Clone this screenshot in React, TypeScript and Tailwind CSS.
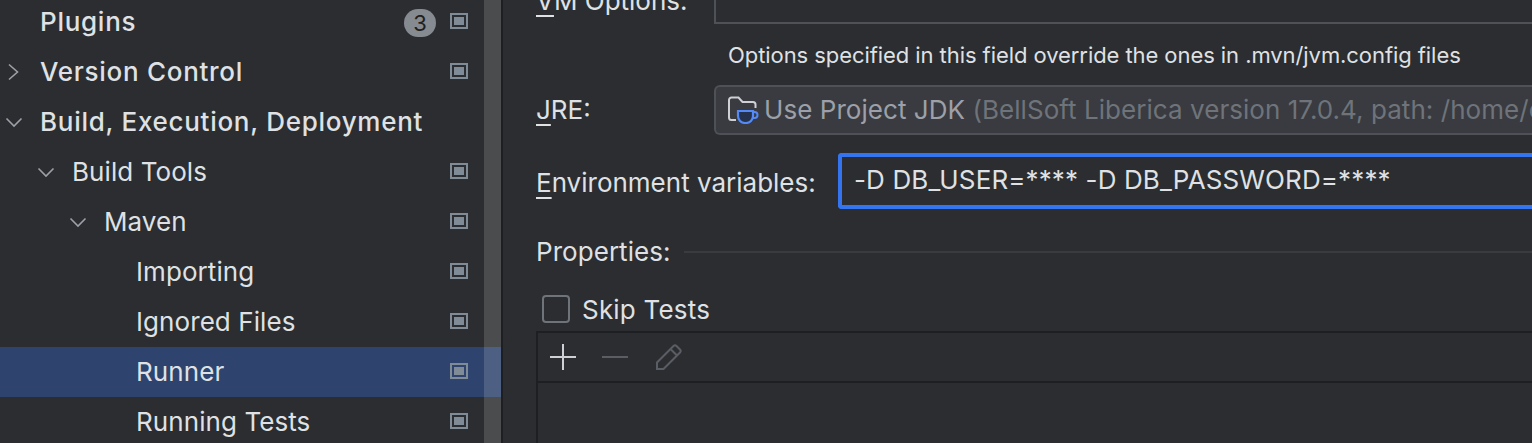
import React from 'react';

const font = { fontFamily: 'Inter, "Noto Sans", sans-serif' };

const ProjectIcon = () => (
  <svg width="18" height="16" viewBox="0 0 18 16" className="mb-[2px] shrink-0">
    <rect x="1" y="1" width="16" height="14" fill="none" stroke="#7f8b97" strokeWidth="2" />
    <rect x="4" y="4" width="10" height="8" fill="#7f8b97" />
  </svg>
);

const Chevron = ({ open }: { open: boolean }) => (
  <svg width="18" height="18" viewBox="0 0 18 18" fill="none" stroke="#9da0a8" strokeWidth="1.6">
    {open ? <path d="M1.5 5.5 9 13l7.5-7.5" /> : <path d="M5 1.5 13.5 9 5 16.5" />}
  </svg>
);

type RowProps = {
  label: string;
  indent: string;
  chevron?: 'open' | 'closed';
  chevronPos?: string;
  badge?: string;
  selected?: boolean;
  top?: boolean;
  project?: boolean;
};

const TreeRow = ({ label, indent, chevron, chevronPos, badge, selected, top, project = true }: RowProps) => (
  <div className={`relative flex h-[50px] items-center pr-[33px] ${indent} ${selected ? 'bg-[#2e436e]' : ''}`}>
    {chevron ? (
      <span className={`absolute top-[16px] ${chevronPos}`}>
        <Chevron open={chevron === 'open'} />
      </span>
    ) : null}
    <span className={`flex-1 text-[26px] leading-[32px] text-[#dfe1e5] whitespace-nowrap ${top ? 'font-medium tracking-[0.72px]' : 'tracking-[0.08px]'}`}>
      {label}
    </span>
    {badge ? (
      <span className="mr-[14px] mt-[2px] flex h-[28px] w-[32px] items-center justify-center rounded-full bg-[#868a91] text-[22px] text-[#1e1f22]">
        {badge}
      </span>
    ) : null}
    {project ? <ProjectIcon /> : null}
  </div>
);

const Sidebar = () => (
  <div className="relative -mt-[3px] w-[501px] shrink-0 bg-[#2b2d30]">
    <TreeRow label="Plugins" indent="pl-[40px]" badge="3" top />
    <TreeRow label="Version Control" indent="pl-[40px]" chevron="closed" chevronPos="left-[4px]" top />
    <TreeRow label="Build, Execution, Deployment" indent="pl-[40px]" chevron="open" chevronPos="left-[5px]" top project={false} />
    <TreeRow label="Build Tools" indent="pl-[72px]" chevron="open" chevronPos="left-[37px]" />
    <TreeRow label="Maven" indent="pl-[104px]" chevron="open" chevronPos="left-[69px]" />
    <TreeRow label="Importing" indent="pl-[136px]" />
    <TreeRow label="Ignored Files" indent="pl-[136px]" />
    <TreeRow label="Runner" indent="pl-[136px]" selected />
    <TreeRow label="Running Tests" indent="pl-[136px]" />
    {/* overlay scrollbar */}
    <div className="absolute bottom-0 right-0 top-0 w-[17px] bg-white/15" />
  </div>
);

const JdkIcon = () => (
  <svg width="32" height="28" viewBox="0 0 32 28" fill="none" className="shrink-0">
    <path d="M8 24H3.500A2.500 2.500 0 0 1 1 21.500V4A2.500 2.500 0 0 1 3.500 1.500h7l4 4.500H25A2.500 2.500 0 0 1 27.500 8.500V12" stroke="#ced0d6" strokeWidth="2" />
    <path d="M10 15h15v5a7 7 0 0 1-7 7h-1a7 7 0 0 1-7-7z" fill="#25324d" stroke="#548af7" strokeWidth="2.200" />
    <path d="M25 16h1.500a3 3 0 0 1 0 6H24" stroke="#548af7" strokeWidth="2" />
  </svg>
);

const Label = ({ mnemonic, rest }: { mnemonic: string; rest: string }) => (
  <span className="text-[26px] leading-[32px] text-[#dfe1e5] whitespace-nowrap">
    <span className="underline decoration-2 underline-offset-[5px]">{mnemonic}</span>
    {rest}
  </span>
);

const Form = () => (
  <div className="flex min-w-0 flex-1 flex-col pl-[33px] -mt-[26px]">
    <div className="flex items-end">
      <div className="w-[178px] pb-[7px]">
        <Label mnemonic="V" rest="M Options:" />
      </div>
      <div className="h-[50px] flex-1 border-2 border-[#4e5157] -mr-[20px]" />
    </div>
    <div className="mt-[15px] pl-[192px] text-[22px] leading-[32px] tracking-[-0.07px] text-[#dfe1e5] whitespace-nowrap">
      Options specified in this field override the ones in .mvn/jvm.config files
    </div>
    <div className="mt-[14px] flex items-center">
      <div className="w-[178px]">
        <Label mnemonic="J" rest="RE:" />
      </div>
      <div className="flex h-[50px] flex-1 items-center overflow-hidden rounded-l-[6px] border-2 border-r-0 border-[#4e5157] bg-[#393b40] pl-[12px] -mr-[20px]">
        <JdkIcon />
        <span className="ml-[4px] text-[26px] leading-[32px] tracking-[0.05px] whitespace-nowrap text-[#9da0a8]">
          Use Project JDK <span className="text-[#6f737a]">(BellSoft Liberica version 17.0.4, path: /home/e</span>
        </span>
      </div>
    </div>
    <div className="mt-[18px] flex items-center">
      <div className="w-[302px] pt-[3px]">
        <Label mnemonic="E" rest="nvironment variables:" />
      </div>
      <div className="flex h-[56px] flex-1 items-center rounded-l-[4px] border-4 border-r-0 border-[#3574f0] pl-[12px] -mr-[20px]">
        <span className="-mt-[3px] text-[26px] leading-[32px] tracking-[0.12px] text-[#dfe1e5] whitespace-nowrap">-D DB_USER=**** -D DB_PASSWORD=****</span>
      </div>
    </div>
    <div className="mt-[27px] flex items-center gap-[13px]">
      <span className="text-[26px] leading-[32px] tracking-[0.05px] text-[#dfe1e5]">Properties:</span>
      <div className="h-[2px] flex-1 bg-[#393b40]" />
    </div>
    <div className="mt-[25px] flex h-[32px] items-center pl-[6px]">
      <span className="h-[28px] w-[28px] rounded-[4px] border-2 border-[#6f737a]" />
      <span className="ml-[12px] mt-[2px] text-[26px] leading-[32px] tracking-[0.2px] text-[#dfe1e5]">Skip Tests</span>
    </div>
    <div className="mt-[6px] flex-1 border-l-2 border-t-2 border-[#1e1f22] -mr-[20px]">
      <div className="flex h-[50px] items-center border-b-2 border-[#1e1f22] pl-[12px]">
        <svg width="26" height="26" viewBox="0 0 26 26" stroke="#ced0d6" strokeWidth="2">
          <path d="M0 13h26M13 0v26" />
        </svg>
        <svg width="26" height="26" viewBox="0 0 26 26" stroke="#5a5d63" strokeWidth="2" className="ml-[26px]">
          <path d="M0 13h26" />
        </svg>
        <svg width="26" height="26" viewBox="0 0 26 26" fill="none" stroke="#5a5d63" strokeWidth="2" className="ml-[28px]">
          <path d="M1 25v-6.500L17.500 2a2.200 2.200 0 0 1 3 0l3.500 3.500a2.200 2.200 0 0 1 0 3L7.500 25zM14.500 5l6.500 6.500" />
        </svg>
      </div>
    </div>
  </div>
);

export default function App() {
  return (
    <div className="flex h-[443px] w-[1532px] overflow-hidden bg-[#2b2d30]" style={font}>
      <Sidebar />
      <div className="h-full w-[2px] shrink-0 bg-[#1e1f22]" />
      <Form />
    </div>
  );
}
